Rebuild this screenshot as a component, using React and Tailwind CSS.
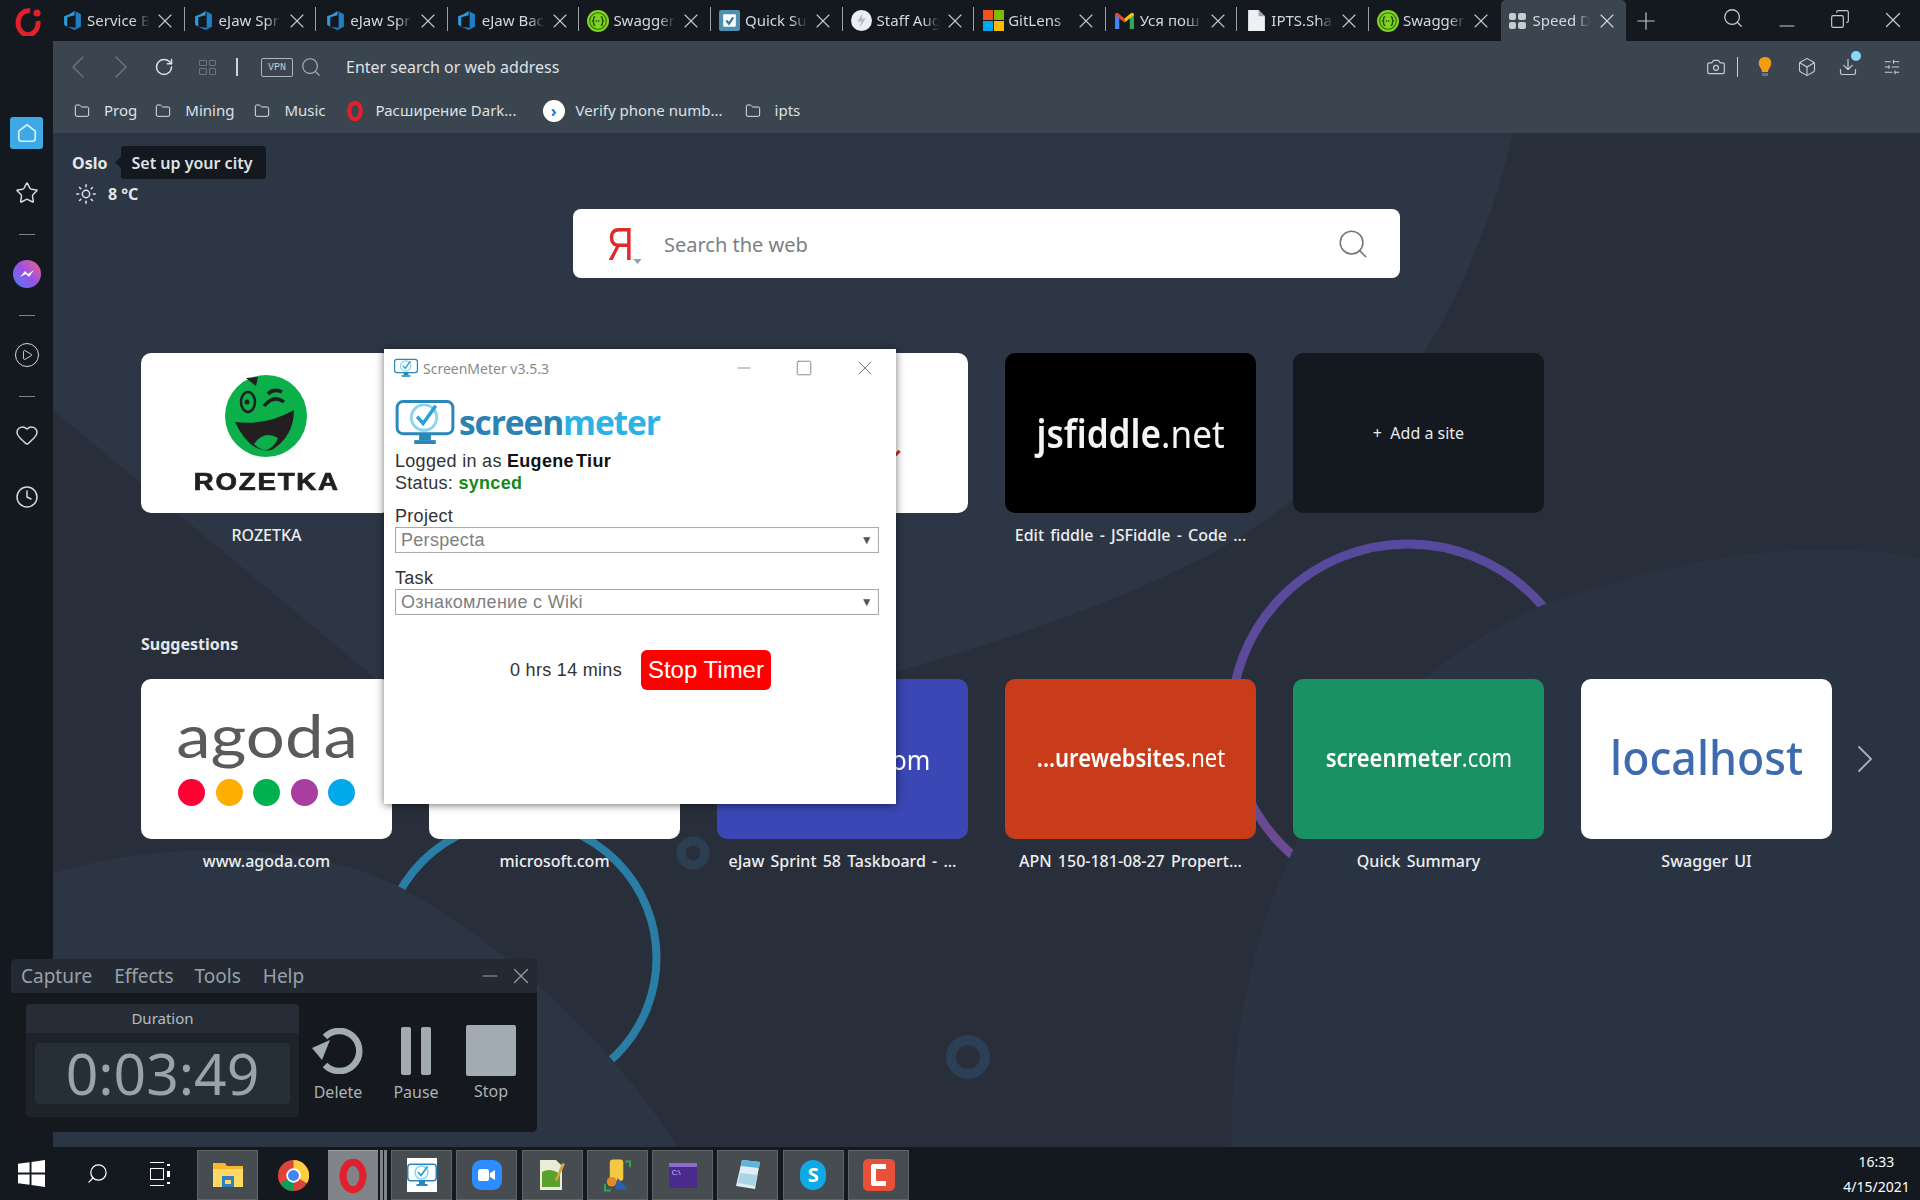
import {
  Box, Camera, ChevronLeft, ChevronRight, Clock, Copy, Download, Folder, Heart, Minus, Play,
  Plus, RotateCw, Search, SlidersHorizontal, Square, Star, Sun, X,
} from 'lucide-react';

function AzureIcon() {
  return (
    <svg viewBox="0 0 20 20" className="h-[21px] w-[21px] shrink-0">
      <path d="M12 1 L7 4 L2 6 V14 L5 16 V7 L12 5 Z" fill="#2f9bd8" />
      <path d="M12 1 L18 4 V16 L12 19 L5 16 L13 17 V1 Z" fill="#1f7fc4" />
    </svg>
  );
}

function SwaggerIcon() {
  return (
    <svg viewBox="0 0 20 20" className="h-[22px] w-[22px] shrink-0">
      <circle cx="10" cy="10" r="10" fill="#7fd321" />
      <circle cx="10" cy="10" r="7.5" fill="none" stroke="#2f6b12" strokeWidth="1" />
      <path d="M7.5 6 Q6 6 6 8 V9 L5 10 L6 11 V12 Q6 14 7.5 14 M12.5 6 Q14 6 14 8 V9 L15 10 L14 11 V12 Q14 14 12.5 14" fill="none" stroke="#1f4a0c" strokeWidth="1.2" />
      <path d="M8 10 H12" stroke="#1f4a0c" strokeWidth="1.5" strokeDasharray="1.2 0.8" />
    </svg>
  );
}

function QuickIcon() {
  return (
    <svg viewBox="0 0 20 20" className="h-[21px] w-[21px] shrink-0">
      <rect width="20" height="20" rx="2" fill="#4f8fb0" />
      <rect x="4" y="4" width="12" height="12" rx="1" fill="#fff" />
      <path d="M7 10 L9.5 13 L13.5 7" fill="none" stroke="#2679a8" strokeWidth="2" />
    </svg>
  );
}

function StaffIcon() {
  return (
    <svg viewBox="0 0 20 20" className="h-[21px] w-[21px] shrink-0">
      <circle cx="10" cy="10" r="10" fill="#eceff1" />
      <path d="M11 3 L6 11 H10 L8 17 L14 8 H10 Z" fill="#b4bac0" />
    </svg>
  );
}

function MicrosoftIcon() {
  return (
    <div className="grid h-[21px] w-[21px] shrink-0 grid-cols-2 gap-px">
      <div className="bg-[#f25022]" />
      <div className="bg-[#7fba00]" />
      <div className="bg-[#00a4ef]" />
      <div className="bg-[#ffb900]" />
    </div>
  );
}

function GmailIcon() {
  return (
    <svg viewBox="0 0 20 16" className="h-[17px] w-[21px] shrink-0">
      <path d="M1 16 V2 L5 5 V16 Z" fill="#4285f4" />
      <path d="M15 16 V5 L19 2 V16 Z" fill="#34a853" />
      <path d="M1 2 Q2 0 4 1 L10 6 L10 10 L1 3 Z" fill="#ea4335" />
      <path d="M19 2 Q18 0 16 1 L10 6 L10 10 L19 3 Z" fill="#fbbc04" />
    </svg>
  );
}

function DocIcon() {
  return (
    <svg viewBox="0 0 16 20" className="h-[21px] w-[17px] shrink-0">
      <path d="M0 0 H10 L16 6 V20 H0 Z" fill="#eef0f2" />
      <path d="M10 0 V6 H16" fill="#9aa2aa" />
    </svg>
  );
}

function SpeedIcon() {
  return (
    <div className="grid h-[16px] w-[17px] shrink-0 grid-cols-2 gap-[2px]">
      <div className="rounded-[2px] bg-[#c6ccd2]" />
      <div className="rounded-[2px] bg-[#c6ccd2]" />
      <div className="rounded-[2px] bg-[#c6ccd2]" />
      <div className="rounded-[2px] bg-[#c6ccd2]" />
    </div>
  );
}

function OperaIcon({ className }) {
  return (
    <svg viewBox="0 0 24 24" className={className}>
      <ellipse cx="12" cy="12" rx="7" ry="9.7" fill="none" stroke="#e0202c" strokeWidth="5" />
    </svg>
  );
}

function MeterIcon({ className }) {
  return (
    <svg viewBox="0 0 60 46" className={className}>
      <rect x="1.5" y="1.5" width="57" height="33" rx="6" fill="none" stroke="#2a87b9" strokeWidth="3" />
      <circle cx="29" cy="18" r="13" fill="none" stroke="#8fd5ef" strokeWidth="3" />
      <path d="M22 17 L28 24 L41 6" fill="none" stroke="#2a9fd6" strokeWidth="3.5" />
      <rect x="24" y="35" width="12" height="6" fill="#2a87b9" />
      <rect x="19" y="41" width="22" height="4" fill="#2a87b9" />
    </svg>
  );
}

const tabs = [
  { title: 'Service B', icon: <AzureIcon /> },
  { title: 'eJaw Spr', icon: <AzureIcon /> },
  { title: 'eJaw Spr', icon: <AzureIcon /> },
  { title: 'eJaw Bac', icon: <AzureIcon /> },
  { title: 'Swagger', icon: <SwaggerIcon /> },
  { title: 'Quick Su', icon: <QuickIcon /> },
  { title: 'Staff Aug', icon: <StaffIcon /> },
  { title: 'GitLens', icon: <MicrosoftIcon /> },
  { title: 'Уся пош', icon: <GmailIcon /> },
  { title: 'IPTS.Sha', icon: <DocIcon /> },
  { title: 'Swagger', icon: <SwaggerIcon /> },
];

function TabBar() {
  return (
    <div className="flex h-[41px] shrink-0 items-stretch bg-[#14181f] text-[15px] text-[#d3d8dd]">
      <div className="flex w-[53px] shrink-0 items-center justify-center">
        <svg viewBox="0 0 30 30" className="ml-[2px] h-[30px] w-[30px]">
          <path d="M17 5 A10 12 0 1 0 25 15" fill="none" stroke="#e0202c" strokeWidth="5" />
          <circle cx="24" cy="7" r="3.5" fill="#e0202c" />
        </svg>
      </div>
      {tabs.map((tab, i) => (
        <div key={i} className="relative flex w-[131.6px] shrink-0 items-center pl-[8px]">
          <div className="flex w-[22px] justify-center">{tab.icon}</div>
          <span className="ml-[4px] w-[66px] whitespace-nowrap [mask-image:linear-gradient(to_right,black_70%,transparent_95%)]">{tab.title}</span>
          <X className="h-[24px] w-[24px] shrink-0 text-[#c4c9ce]" strokeWidth={1.1} />
          {i < 10 && <div className="absolute right-0 top-[7px] h-[24px] w-px bg-[#9aa1a8]" />}
        </div>
      ))}
      <div className="flex w-[125px] shrink-0 items-center rounded-t-[5px] bg-[#3b4550] pl-[8px]">
        <SpeedIcon />
        <span className="ml-[7px] w-[60px] whitespace-nowrap [mask-image:linear-gradient(to_right,black_70%,transparent_95%)]">Speed D</span>
        <X className="ml-[2px] h-[24px] w-[24px] shrink-0 text-[#d3d8dd]" strokeWidth={1.1} />
      </div>
      <div className="flex w-[40px] items-center justify-center">
        <Plus className="h-[28px] w-[28px] text-[#c4c9ce]" strokeWidth={1} />
      </div>
      <div className="ml-auto flex items-start pr-[14px] pt-[7px] text-[#c4c9ce]">
        <Search className="h-[22px] w-[22px]" strokeWidth={1.4} />
        <Minus className="ml-[31px] mt-[7px] h-[24px] w-[24px]" strokeWidth={1.1} />
        <Copy className="ml-[31px] mt-[2px] h-[20px] w-[20px] -scale-x-100" strokeWidth={1.4} />
        <X className="ml-[30px] h-[26px] w-[26px]" strokeWidth={1.1} />
      </div>
    </div>
  );
}

function AddressBar() {
  return (
    <div className="flex h-[52px] items-center pl-[5px] text-[16px] text-[#dde1e5]">
      <ChevronLeft className="h-[40px] w-[40px] text-[#6d7680]" strokeWidth={0.8} />
      <ChevronRight className="ml-[3px] h-[40px] w-[40px] text-[#6d7680]" strokeWidth={0.8} />
      <RotateCw className="ml-[13px] h-[20px] w-[20px] text-[#dde1e5]" strokeWidth={1.8} />
      <div className="ml-[25px] grid h-[15px] w-[17px] grid-cols-2 gap-[2px]">
        <div className="rounded-[1px] border border-[#6d7680]" />
        <div className="rounded-[1px] border border-[#6d7680]" />
        <div className="rounded-[1px] border border-[#6d7680]" />
        <div className="rounded-[1px] border border-[#6d7680]" />
      </div>
      <div className="ml-[20px] h-[18px] w-[2px] bg-[#cfd4d9]" />
      <div className="ml-[23px] flex h-[19px] w-[32px] items-center justify-center rounded-[2px] border border-[#aeb5bc] font-['Liberation_Mono',monospace] text-[10px] text-[#c5cad0]">VPN</div>
      <Search className="ml-[7px] h-[22px] w-[22px] text-[#aeb5bc]" strokeWidth={1.2} />
      <span className="ml-[24px]">Enter search or web address</span>
      <div className="ml-auto flex items-center pr-[19px] text-[#c8cdd2]">
        <Camera className="h-[20px] w-[20px]" strokeWidth={1.4} />
        <div className="ml-[11px] h-[20px] w-px bg-[#c8cdd2]" />
        <svg viewBox="0 0 16 22" className="ml-[19px] h-[22px] w-[16px]">
          <path d="M8 1 C3 1 1 5 2 9 C3 12 5 13 5 16 H11 C11 13 13 12 14 9 C15 5 13 1 8 1 Z" fill="#f39c12" />
          <rect x="5" y="17" width="6" height="3" fill="#5d7590" />
        </svg>
        <Box className="ml-[24px] h-[20px] w-[20px]" strokeWidth={1.3} />
        <div className="relative ml-[21px]">
          <Download className="h-[20px] w-[20px]" strokeWidth={1.4} />
          <div className="absolute -right-[3px] -top-[6px] h-[10px] w-[10px] rounded-full bg-[#8fd6fa]" />
        </div>
        <SlidersHorizontal className="ml-[25px] h-[18px] w-[18px]" strokeWidth={1.4} />
      </div>
    </div>
  );
}

function BookmarkFolder({ label, className = '' }) {
  return (
    <div className={`flex items-center ${className}`}>
      <Folder className="h-[16px] w-[16px]" strokeWidth={1.5} />
      <span className="ml-[14px]">{label}</span>
    </div>
  );
}

function BookmarkBar() {
  return (
    <div className="flex h-[35px] items-center pl-[21px] text-[15px] text-[#dde1e5]">
      <BookmarkFolder label="Prog" />
      <BookmarkFolder label="Mining" className="ml-[18px]" />
      <BookmarkFolder label="Music" className="ml-[20px]" />
      <OperaIcon className="ml-[19px] h-[22px] w-[20px]" />
      <span className="ml-[11px] w-[140px] whitespace-nowrap">Расширение Dark...</span>
      <div className="ml-[27px] flex h-[22px] w-[22px] items-center justify-center rounded-full bg-white text-[16px] leading-none font-bold text-[#1976d2]">›</div>
      <span className="ml-[11px] w-[147px] whitespace-nowrap">Verify phone numb...</span>
      <BookmarkFolder label="ipts" className="ml-[22px]" />
    </div>
  );
}

function Sidebar() {
  const dash = 'h-px w-[16px] bg-[#7d858d]';
  const icon = 'h-[24px] w-[24px] text-[#d5d9de]';
  return (
    <div className="flex w-[53px] shrink-0 flex-col items-center bg-[#14181f] pt-[76px]">
      <div className="flex h-[32px] w-[33px] items-center justify-center rounded-[3px] bg-[#3fa9e6]">
        <svg viewBox="0 0 24 24" className="h-[22px] w-[22px]">
          <path d="M12 3 L21 10 V18 Q21 21 18 21 H6 Q3 21 3 18 V10 Z" fill="none" stroke="#d9f0fc" strokeWidth="1.8" strokeLinejoin="round" />
        </svg>
      </div>
      <Star className={`mt-[32px] ${icon}`} strokeWidth={1.5} />
      <div className={`mt-[29px] ${dash}`} />
      <div className="mt-[25px] flex h-[28px] w-[28px] items-center justify-center rounded-full bg-gradient-to-tr from-[#2f7bf6] via-[#9a4de8] to-[#f5587b]">
        <svg viewBox="0 0 20 20" className="h-[20px] w-[20px]">
          <path d="M3 13 L8 7 L11 10 L17 6 L12 13 L9 10 Z" fill="#fff" />
        </svg>
      </div>
      <div className={`mt-[27px] ${dash}`} />
      <div className="mt-[27px] flex h-[24px] w-[24px] items-center justify-center rounded-full border-[1.5px] border-[#d5d9de]">
        <Play className="ml-px h-[12px] w-[12px] text-[#d5d9de]" strokeWidth={1.8} />
      </div>
      <div className={`mt-[29px] ${dash}`} />
      <Heart className={`mt-[26px] ${icon}`} strokeWidth={1.5} />
      <Clock className={`mt-[38px] ${icon}`} strokeWidth={1.5} />
    </div>
  );
}

function Wallpaper() {
  return (
    <svg viewBox="0 0 1867 1014" className="absolute inset-0 h-full w-full">
      <defs>
        <linearGradient id="purpleArc" x1="0" y1="0" x2="0" y2="1">
          <stop offset="0" stopColor="#564a9e" />
          <stop offset="1" stopColor="#704a90" />
        </linearGradient>
      </defs>
      <rect width="1867" height="1014" fill="#282f3b" />
      <path d="M0 277 V0 H1460 C1420 170 1330 330 1150 425 C1020 490 900 520 820 547 L340 560 Z" fill="#2c3644" />
      <circle cx="1355" cy="588" r="177" fill="none" stroke="url(#purpleArc)" strokeWidth="9" />
      <circle cx="466.5" cy="825" r="137" fill="none" stroke="#2a7ea6" strokeWidth="8" />
      <circle cx="640" cy="720" r="12" fill="none" stroke="#2c3f52" strokeWidth="9" />
      <circle cx="915" cy="924" r="17" fill="none" stroke="#2b3f55" strokeWidth="10" />
      <path d="M1178 1014 C1178 790 1268 570 1490 472 C1640 420 1760 405 1867 425 V1014 Z" fill="#2a3342" />
      <path d="M0 740 C120 705 260 710 347 754 C450 810 560 910 624 1014 H0 Z" fill="#2c3543" />
    </svg>
  );
}

function Tile({ label, className = 'bg-white', children }) {
  return (
    <div className="w-[251px]">
      <div className={`flex h-[160px] items-center justify-center overflow-hidden rounded-[10px] ${className}`}>{children}</div>
      <div className="mt-[8px] flex h-[28px] items-center justify-center whitespace-nowrap text-[16px] font-medium text-[#eceef0] [word-spacing:2px]">{label}</div>
    </div>
  );
}

function RozetkaLogo() {
  return (
    <div className="flex flex-col items-center">
      <svg viewBox="0 0 84 84" className="h-[84px] w-[84px]">
        <circle cx="42" cy="42" r="41" fill="#0bb04b" />
        <path d="M11 48 Q42 52 70 36 Q70 62 48 76 Q26 80 11 48 Z" fill="#231f20" />
        <path d="M30 70 Q40 56 54 64 Q50 74 42 76 Q36 76 30 70 Z" fill="#0bb04b" />
        <ellipse cx="24" cy="28" rx="7" ry="10" fill="none" stroke="#231f20" strokeWidth="2.5" />
        <circle cx="23" cy="28" r="2.5" fill="#231f20" />
        <path d="M40 32 Q50 20 60 28 M44 20 Q50 14 58 18" fill="none" stroke="#231f20" strokeWidth="3.5" />
        <path d="M22 4 L34 3 L32 12 Z" fill="#231f20" />
      </svg>
      <div className="-mb-[2px] mt-[11px] scale-x-[1.2] font-['Liberation_Sans',sans-serif] text-[23px] leading-[26px] font-bold tracking-[1.5px] text-[#231f20] [-webkit-text-stroke:0.7px_#231f20]">ROZETKA</div>
    </div>
  );
}

function AgodaLogo() {
  const dots = ['bg-[#ff0033]', 'bg-[#ffad00]', 'bg-[#00b14f]', 'bg-[#a83ea0]', 'bg-[#00a9ea]'];
  return (
    <div className="flex flex-col items-center pb-[7px]">
      <div className="h-[60px] scale-x-[1.15] font-['Lato',sans-serif] text-[60px] leading-[60px] text-[#5a5a5a]">agoda</div>
      <div className="mt-[14px] flex gap-[10.5px]">
        {dots.map((dot) => (
          <div key={dot} className={`h-[27px] w-[27px] rounded-full ${dot}`} />
        ))}
      </div>
    </div>
  );
}

function SiteName({ bold, rest, className = '' }) {
  return (
    <span className={`inline-block whitespace-nowrap font-['Noto_Sans',sans-serif] ${className}`}>
      <span className="font-semibold">{bold}</span>
      <span>{rest}</span>
    </span>
  );
}

function SpeedDial() {
  return (
    <div className="relative min-h-0 flex-1 overflow-hidden">
      <Wallpaper />
      <div className="relative pl-[88px] pt-[13px]">
        <div className="-ml-[69px] flex h-[33px] items-center text-[16px] font-bold text-[#e4e7ea]">
          <span>Oslo</span>
          <div className="relative ml-[14px] flex h-[33px] items-center rounded-[3px] bg-[#14181f] pl-[10px] pr-[14px] text-[16px] font-semibold text-[#dfe2e5]">
            <div className="absolute -left-[4px] top-[12px] h-[9px] w-[9px] rotate-45 bg-[#14181f]" />
            <span className="relative">Set up your city</span>
          </div>
        </div>
        <div className="-ml-[66px] flex h-[30px] items-center text-[16px] font-bold text-[#e4e7ea]">
          <Sun className="h-[22px] w-[22px]" strokeWidth={1.6} />
          <span className="ml-[11px]">8 °C</span>
        </div>
        <div className="ml-[432px] flex h-[69px] w-[827px] items-center rounded-[8px] bg-white">
          <span className="ml-[34px] w-[26px] origin-left scale-x-[0.8] font-['Liberation_Sans',sans-serif] text-[46px] leading-none text-[#e0292b]">Я</span>
          <svg viewBox="0 0 10 6" className="mt-[36px] h-[5px] w-[9px]">
            <path d="M0 0 H10 L5 6 Z" fill="#9aa0a6" />
          </svg>
          <span className="ml-[22px] pt-[3px] text-[20px] text-[#7a7f86]">Search the web</span>
          <Search className="ml-auto mr-[30px] h-[34px] w-[34px] text-[#71767c]" strokeWidth={1.1} />
        </div>
        <div className="mt-[75px] flex gap-[37px]">
          <Tile label="ROZETKA"><RozetkaLogo /></Tile>
          <Tile label="" />
          <Tile label="">
            <div className="ml-[110px] mt-[40px] h-[6px] w-[3px] rotate-45 bg-[#c0392b]" />
          </Tile>
          <Tile label="Edit fiddle - JSFiddle - Code ..." className="bg-black">
            <SiteName bold="jsfiddle" rest=".net" className="scale-x-[0.9] text-[39px] text-[#f2f4f6]" />
          </Tile>
          <Tile label="" className="bg-[#14181f]">
            <span className="text-[16px] text-[#e8eaec]">+&nbsp;&nbsp;Add a site</span>
          </Tile>
        </div>
        <div className="mt-[83px] h-[24px] text-[16px] leading-[24px] font-bold text-[#e4e7ea]">Suggestions</div>
        <div className="mt-[23px] flex gap-[37px]">
          <Tile label="www.agoda.com"><AgodaLogo /></Tile>
          <Tile label="microsoft.com" />
          <Tile label="eJaw Sprint 58 Taskboard - ..." className="bg-[#3a47b4]">
            <SiteName bold="dev.azure" rest=".com" className="scale-x-[0.9] text-[28px] text-white" />
          </Tile>
          <Tile label="APN 150-181-08-27 Propert..." className="bg-[#c83c1a]">
            <SiteName bold="...urewebsites" rest=".net" className="mb-[3px] scale-x-[0.88] text-[25px] text-white" />
          </Tile>
          <Tile label="Quick Summary" className="bg-[#1a9163]">
            <SiteName bold="screenmeter" rest=".com" className="mb-[3px] scale-x-[0.88] text-[25px] text-white" />
          </Tile>
          <Tile label="Swagger UI">
            <span className="mb-[3px] inline-block scale-x-[0.95] font-['Noto_Sans',sans-serif] text-[47px] font-medium text-[#3e6bb0]">localhost</span>
          </Tile>
          <ChevronRight className="-ml-[28px] mt-[56px] h-[48px] w-[48px] text-[#aab0b7]" strokeWidth={0.9} />
        </div>
      </div>
    </div>
  );
}

function SelectRow({ label, value }) {
  return (
    <div>
      <div className="h-[21px] leading-[21px]">{label}</div>
      <div className="flex h-[26px] items-center justify-between border border-[#a9a9a9] pl-[5px] pr-[5px] text-[#808080] shadow-[inset_0_0_1px_#ccc]">
        <span>{value}</span>
        <span className="text-[12px] text-[#555]">▼</span>
      </div>
    </div>
  );
}

function ScreenMeterWindow() {
  return (
    <div className="absolute left-[384px] top-[349px] h-[455px] w-[512px] bg-white font-['Liberation_Sans',sans-serif] text-[18px] tracking-[0.3px] text-[#333] shadow-[0_1px_8px_rgba(0,0,0,0.55)]">
      <div className="flex h-[38px] items-center pl-[10px] font-['Noto_Sans',sans-serif] text-[14px] tracking-normal text-[#8a8a8a]">
        <MeterIcon className="h-[22px] w-[24px]" />
        <span className="ml-[5px]">ScreenMeter v3.5.3</span>
        <Minus className="ml-[185px] h-[20px] w-[20px] text-[#777]" strokeWidth={1} />
        <Square className="ml-[41px] h-[18px] w-[18px] text-[#777]" strokeWidth={1.1} />
        <X className="ml-[40px] h-[24px] w-[24px] text-[#777]" strokeWidth={1} />
      </div>
      <div className="px-[11px] pr-[17px]">
        <div className="mt-[13px] flex h-[45px] items-center">
          <MeterIcon className="h-[45px] w-[60px]" />
          <span className="ml-[4px] font-['Open_Sans',sans-serif] text-[33.5px] leading-none font-bold tracking-[-1.1px] text-[#2a83b4]">screen<span className="text-[#2cb3e6]">meter</span></span>
        </div>
        <div className="mt-[5px] h-[22px] leading-[22px]">Logged in as <b className="text-[#111] [word-spacing:-3px]">Eugene Tiur</b></div>
        <div className="h-[21px] leading-[22px]">Status: <b className="text-[#168a16]">synced</b></div>
        <div className="mt-[13px] flex flex-col gap-[15px]">
          <SelectRow label="Project" value="Perspecta" />
          <SelectRow label="Task" value="Ознакомление с Wiki" />
        </div>
        <div className="mt-[35px] flex items-center pl-[115px]">
          <span>0 hrs 14 mins</span>
          <div className="ml-[19px] flex h-[40px] w-[130px] items-center justify-center rounded-[6px] bg-[#ff0000] text-[24px] tracking-normal text-white">Stop Timer</div>
        </div>
      </div>
    </div>
  );
}

function CaptureWidget() {
  const label = 'text-[16px] text-[#aab2b9]';
  return (
    <div className="absolute left-[11px] top-[959px] h-[173px] w-[526px] overflow-hidden rounded-[5px] bg-[#15191e] font-['Noto_Sans',sans-serif]">
      <div className="flex h-[34px] items-center bg-[#232a33] pl-[10px] text-[19px] text-[#98a1a9]">
        <span>Capture</span>
        <span className="ml-[22px]">Effects</span>
        <span className="ml-[21px]">Tools</span>
        <span className="ml-[22px]">Help</span>
        <Minus className="ml-auto h-[24px] w-[24px]" strokeWidth={1.1} />
        <X className="ml-[6px] mr-[3px] h-[26px] w-[26px]" strokeWidth={1.1} />
      </div>
      <div className="flex">
        <div className="ml-[15px] mt-[11px] h-[113px] w-[273px] rounded-[4px] bg-[#1d2329]">
          <div className="flex h-[29px] items-center justify-center rounded-t-[4px] bg-[#262d36] text-[15px] text-[#b6bcc2]">Duration</div>
          <div className="mx-[9px] mt-[10px] flex h-[61px] items-center justify-center rounded-[4px] bg-[#262e37] text-[57px] leading-none text-[#98a4ac]">0:03:49</div>
        </div>
        <div className="ml-[13px] mt-[35px] flex w-[52px] flex-col items-center">
          <svg viewBox="0 0 52 46" className="h-[46px] w-[52px]">
            <path d="M13 9 A20 20 0 1 1 13 37" fill="none" stroke="#a2abb2" strokeWidth="6.5" />
            <path d="M0 20 L18 12 L10 32 Z" fill="#a2abb2" />
          </svg>
          <span className={`mt-[6px] ${label}`}>Delete</span>
        </div>
        <div className="ml-[26px] mt-[34px] flex w-[52px] flex-col items-center">
          <div className="flex h-[48px] gap-[10px]">
            <div className="w-[10px] rounded-[2px] bg-[#a2abb2]" />
            <div className="w-[10px] rounded-[2px] bg-[#a2abb2]" />
          </div>
          <span className={`mt-[5px] ${label}`}>Pause</span>
        </div>
        <div className="ml-[24px] mt-[32px] flex w-[50px] flex-col items-center">
          <div className="h-[51px] w-[50px] rounded-[2px] bg-[#a2abb2]" />
          <span className={`mt-[3px] ${label}`}>Stop</span>
        </div>
      </div>
    </div>
  );
}

function AppButton({ active, children }) {
  return (
    <div className={`flex h-[50px] w-[61px] shrink-0 items-center justify-center border border-[#5f6468] ${active ? 'bg-[#808488]' : 'bg-[#474c50]'}`}>
      {children}
    </div>
  );
}

function Taskbar() {
  return (
    <div className="flex h-[53px] shrink-0 items-end bg-[#14191f] font-['Noto_Sans',sans-serif] text-white">
      <div className="flex h-[53px] w-[197px] shrink-0 items-center">
        <svg viewBox="0 0 28 28" className="ml-[18px] h-[27px] w-[27px]">
          <path d="M0 4 L12 2.3 V13 H0 Z M14 2 L28 0 V13 H14 Z M0 15 H12 V25.7 L0 24 Z M14 15 H28 V28 L14 26 Z" fill="#fff" />
        </svg>
        <Search className="ml-[41px] h-[23px] w-[23px] -scale-x-100" strokeWidth={1.3} />
        <div className="ml-[41px] flex items-center gap-[3px]">
          <div className="flex h-[24px] w-[14px] flex-col justify-between border-y border-white py-[5px]"><div className="h-full border border-white" /></div>
          <div className="flex h-[20px] flex-col justify-between">
            <div className="h-[2px] w-[3px] bg-white" />
            <div className="h-[6px] w-[3px] bg-white" />
            <div className="h-[2px] w-[3px] bg-white" />
          </div>
        </div>
      </div>
      <AppButton>
        <svg viewBox="0 0 30 28" className="h-[28px] w-[30px]">
          <path d="M0 2 H12 L14 5 H30 V26 H0 Z" fill="#f5b82e" />
          <path d="M0 8 H30 V26 H0 Z" fill="#ffd966" />
          <rect x="9" y="15" width="12" height="11" fill="#2f7fc1" />
          <rect x="12" y="19" width="6" height="4" fill="#ffd966" />
        </svg>
      </AppButton>
      <div className="flex h-[50px] w-[70px] items-center justify-center">
        <svg viewBox="0 0 30 30" className="h-[31px] w-[31px]">
          <circle cx="15" cy="15" r="15" fill="#db4437" />
          <path d="M15 15 L2 22.5 A15 15 0 0 0 15 30 Z" fill="#0f9d58" />
          <path d="M15 0 A15 15 0 0 1 28 22.5 L15 15 Z" fill="#ffcd40" />
          <path d="M2 22.5 L15 15 L8 2.8 A15 15 0 0 0 2 22.5 Z" fill="#db4437" />
          <circle cx="15" cy="15" r="7" fill="#fff" />
          <circle cx="15" cy="15" r="5.3" fill="#4285f4" />
        </svg>
      </div>
      <div className="flex h-[50px] w-[50px] items-center justify-center border-t border-[#9a9ea2] bg-[#808488]">
        <OperaIcon className="h-[36px] w-[34px]" />
      </div>
      <div className="ml-[2px] h-[50px] w-[3px] bg-[#808488]" />
      <div className="ml-px mr-[4px] h-[50px] w-[3px] bg-[#808488]" />
      <div className="flex gap-[4.3px]">
        <AppButton>
          <div className="flex h-[34px] w-[30px] items-center justify-center bg-white"><MeterIcon className="h-[30px] w-[30px]" /></div>
        </AppButton>
        <AppButton>
          <div className="flex h-[30px] w-[30px] items-center justify-center rounded-[9px] bg-[#2d8cff]">
            <svg viewBox="0 0 20 14" className="h-[12px] w-[17px]"><rect width="13" height="14" rx="3" fill="#fff" /><path d="M14 5 L20 1 V13 L14 9 Z" fill="#fff" /></svg>
          </div>
        </AppButton>
        <AppButton>
          <svg viewBox="0 0 28 32" className="h-[32px] w-[28px]">
            <path d="M2 1 H18 L24 7 V31 H2 Z" fill="#e8ecd8" />
            <path d="M4 13 Q12 8 22 15 V28 H4 Z" fill="#5aa02c" />
            <path d="M24 4 L27 5 L19 22 L17 21 Z" fill="#d8a93a" />
          </svg>
        </AppButton>
        <AppButton>
          <svg viewBox="0 0 28 34" className="h-[34px] w-[27px]">
            <rect x="6" y="1" width="14" height="22" rx="3" fill="#f5c842" />
            <path d="M22 3 H27 V9 M1 26 V33 H7" fill="none" stroke="#2fa84f" strokeWidth="2" />
            <path d="M14 20 L25 32 H12 Z" fill="#2b5fb0" />
            <circle cx="8" cy="24" r="5" fill="#e08a2c" />
          </svg>
        </AppButton>
        <AppButton>
          <div className="h-[25px] w-[28px] border-t-[4px] border-[#8a6bd0] bg-[#4b2a8e] pl-[3px] pt-[2px] text-[7px] leading-none text-[#d5c8f0]">C:\</div>
        </AppButton>
        <AppButton>
          <svg viewBox="0 0 26 32" className="h-[32px] w-[26px]">
            <path d="M7 1 L25 3 L20 30 L1 27 Z" fill="#dfeef5" />
            <path d="M7 1 L25 3 L24 9 L6 7 Z" fill="#5fb4dc" />
            <path d="M5 14 L22 16 L20 27 L3 24 Z" fill="#a9d3e6" />
          </svg>
        </AppButton>
        <AppButton>
          <div className="flex h-[30px] w-[26px] items-center justify-center rounded-full bg-[#0fa9e6] text-[20px] font-bold leading-none text-white">S</div>
        </AppButton>
        <AppButton>
          <div className="flex h-[32px] w-[32px] items-center justify-center rounded-[5px] bg-[#e8503a]">
            <div className="h-[22px] w-[15px] rounded-l-[3px] border-y-[5px] border-l-[5px] border-white" />
          </div>
        </AppButton>
      </div>
      <div className="ml-auto flex h-[53px] w-[77px] flex-col items-center justify-center pr-[10px] text-[14px] leading-[25px]">
        <span>16:33</span>
        <span>4/15/2021</span>
      </div>
    </div>
  );
}

export default function App() {
  return (
    <div className="relative flex h-[1200px] w-[1920px] flex-col overflow-hidden bg-[#14181f] font-['Noto_Sans',sans-serif]">
      <TabBar />
      <div className="flex min-h-0 flex-1">
        <Sidebar />
        <div className="flex min-w-0 flex-1 flex-col">
          <div className="h-[92px] shrink-0 bg-[#3b4550]">
            <AddressBar />
            <BookmarkBar />
          </div>
          <SpeedDial />
        </div>
      </div>
      <Taskbar />
      <ScreenMeterWindow />
      <CaptureWidget />
    </div>
  );
}
